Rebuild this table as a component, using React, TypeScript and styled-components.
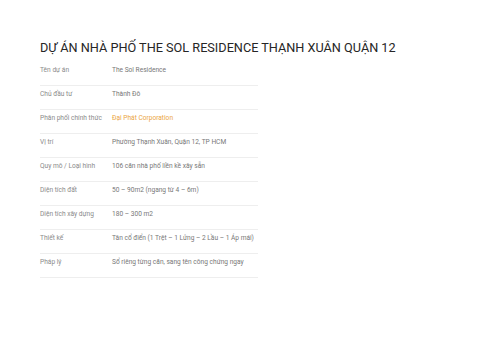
import React from 'react'
import styled, { createGlobalStyle } from 'styled-components'

const GlobalStyle = createGlobalStyle`
  html, body {
    margin: 0;
    padding: 0;
    background: #ffffff;
    font-family: Roboto, 'Liberation Sans', sans-serif;
  }
`

const rows = [
  { label: 'Tên dự án', value: 'The Sol Residence' },
  { label: 'Chủ đầu tư', value: 'Thành Đô' },
  { label: 'Phân phối chính thức', value: 'Đại Phát Corporation', link: true },
  { label: 'Vị trí', value: 'Phường Thạnh Xuân, Quận 12, TP HCM' },
  { label: 'Quy mô / Loại hình', value: '106 căn nhà phố liền kề xây sẵn' },
  { label: 'Diện tích đất', value: '50 – 90m2 (ngang từ 4 – 6m)' },
  { label: 'Diện tích xây dựng', value: '180 – 300 m2' },
  { label: 'Thiết kế', value: 'Tân cổ điển (1 Trệt – 1 Lửng – 2 Lầu – 1 Áp mái)' },
  { label: 'Pháp lý', value: 'Sổ riêng từng căn, sang tên công chứng ngay' },
]

const App = () => {
  return (
    <>
      <GlobalStyle />
      <PageStyled>
        <Title>DỰ ÁN NHÀ PHỐ THE SOL RESIDENCE THẠNH XUÂN QUẬN 12</Title>
        <Table>
          {rows.map((row) => (
            <Row key={row.label}>
              <Label>{row.label}</Label>
              <Value $link={row.link}>{row.value}</Value>
            </Row>
          ))}
        </Table>
      </PageStyled>
    </>
  )
}

const PageStyled = styled.section`
  padding: 40px 40px 0;
  width: 400px;
`

const Title = styled.h1`
  margin: 0 0 7px;
  font-size: 12.7px;
  line-height: 15px;
  font-weight: 400;
  color: #262626;
  white-space: nowrap;
`

const Table = styled.div`
  width: 218px;
`

const Row = styled.div`
  display: grid;
  grid-template-columns: 72px 1fr;
  height: 24px;
  padding-top: 4px;
  box-sizing: border-box;
  border-bottom: 1px solid #eeeeee;
  font-size: 6.6px;
  line-height: 8px;
  font-weight: 400;
`

const Label = styled.div`
  color: #8a8a8a;
  white-space: nowrap;
`

const Value = styled.div<{ $link?: boolean }>`
  color: ${(p) => (p.$link ? '#eba53f' : '#777777')};
  white-space: nowrap;
`

export default App
